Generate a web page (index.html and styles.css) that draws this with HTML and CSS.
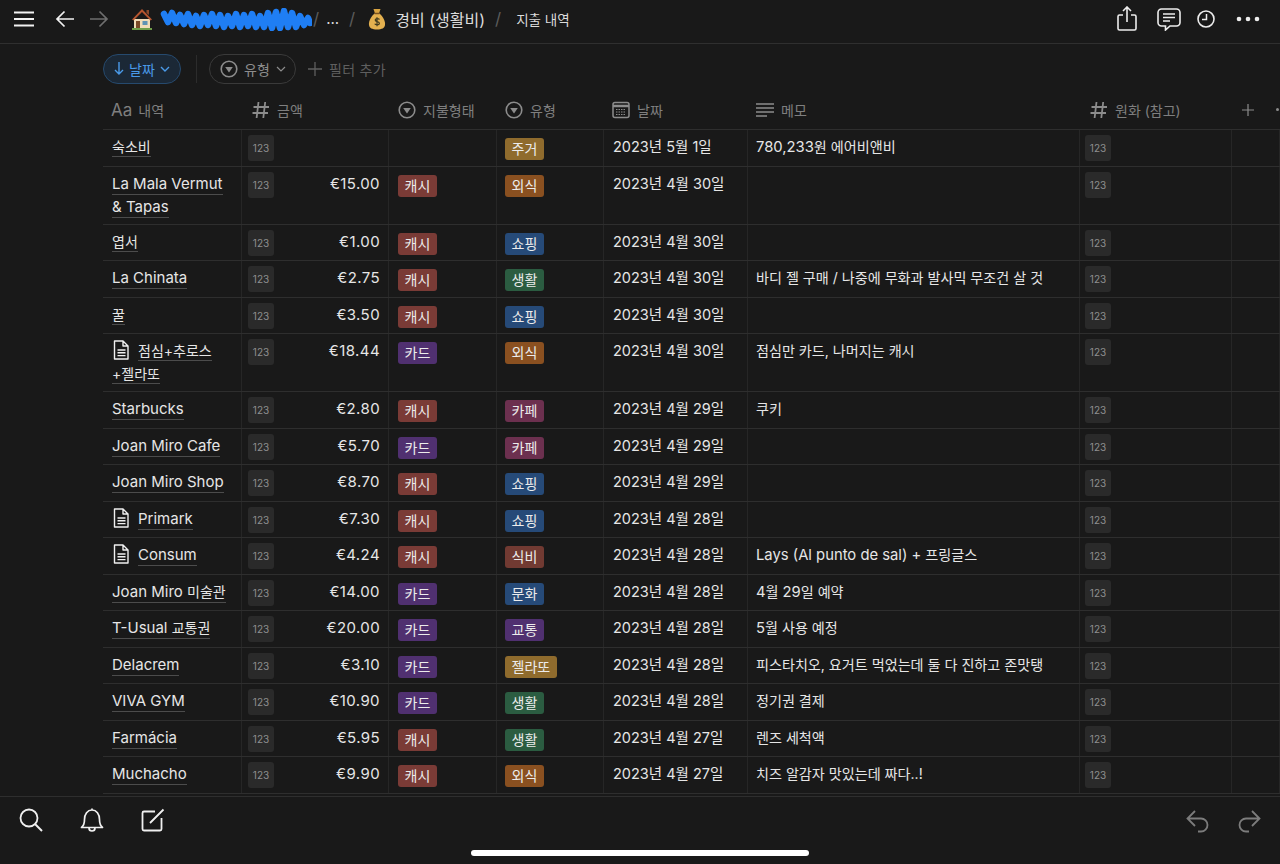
FILE: index.html
```html
<!DOCTYPE html>
<html lang="ko">
<head>
    <meta charset="UTF-8">
    <meta name="viewport" content="width=device-width, initial-scale=1.0">
    <title>지출 내역</title>
    <link rel="stylesheet" href="styles.css">
</head>
<body>
    <svg class="defs" width="0" height="0">
        <symbol id="i-select" viewBox="0 0 18 18">
            <circle cx="9" cy="9" r="7.8" fill="none" stroke="currentColor" stroke-width="1.6"/>
            <path d="M5.2 7h7.6L9 12.4z" fill="currentColor"/>
        </symbol>
        <symbol id="i-hash" viewBox="0 0 18 18">
            <path d="M6.5 1 4.6 17M13.2 1l-1.9 16M1.5 6H17M.5 12H16" fill="none" stroke="currentColor" stroke-width="1.8"/>
        </symbol>
        <symbol id="i-doc" viewBox="0 0 18 20">
            <path d="M2.5 1H11l5 5v13H2.500zM11 1v5h5M5.500 10h8M5.500 12.800h8M5.500 15.600h8" fill="none" stroke="currentColor" stroke-width="1.4" stroke-linejoin="round"/>
        </symbol>
    </svg>

    <header class="topbar">
        <svg class="icon-menu" width="20" height="16" viewBox="0 0 20 16"><path d="M0 1.5h20M0 8h20M0 14.5h20" stroke="#f2f2f2" stroke-width="2"/></svg>
        <svg class="icon-back" width="20" height="18" viewBox="0 0 20 18"><path d="M19 9H2M9.5 1.5 2 9l7.5 7.5" fill="none" stroke="#f2f2f2" stroke-width="1.7"/></svg>
        <svg class="icon-forward" width="20" height="18" viewBox="0 0 20 18"><path d="M1 9h17M10.5 1.5 18 9l-7.5 7.5" fill="none" stroke="#6e6e6e" stroke-width="1.7"/></svg>
        <nav class="crumbs">
            <svg class="emoji-house" width="22" height="22" viewBox="0 0 22 22">
                <path d="M3 11h16v10H3z" fill="#f0dcb8"/>
                <path d="M11 1 1 11.5l1.500 1L11 4l8.500 8.500 1.500-1z" fill="#b5552f"/>
                <path d="M15.5 2H18v5l-2.500-2z" fill="#8a4a2c"/>
                <path d="M5 13h4v8H5z" fill="#7a4a28"/>
                <path d="M11.5 13h5v4h-5z" fill="#5f93b5"/>
                <path d="M1 20h20v2H1z" fill="#6f9e4a"/>
            </svg>
            <svg class="scribble" width="152" height="23" viewBox="0 0 152 23">
                <path d="M4 6 8 14 12 5 16 15 20 7 24 16 28 6 32 17 36 8 40 18 44 7 48 17 52 6 56 18 60 7 64 19 68 8 72 18 76 6 80 19 84 7 88 18 92 6 96 19 100 8 104 19 108 5 112 20 116 4 120 20 124 3 128 19 132 5 136 19 140 8 144 17 148 10 150 15" fill="none" stroke="#1f7ef4" stroke-width="6.5" stroke-linecap="round" stroke-linejoin="round"/>
            </svg>
            <span class="sep sep-first">/</span>
            <span class="crumb-dots">...</span>
            <span class="sep">/</span>
            <svg class="emoji-bag" width="18" height="22" viewBox="0 0 18 22">
                <path d="M5.5 1h7L11 5.5H7z" fill="#d9a441"/>
                <path d="M6.5 5.5h5C15 8.5 17.5 13 17 17c-.4 3-3 4.500-8 4.500S1.400 20 1 17C.5 13 3 8.500 6.500 5.500z" fill="#e3b04f"/>
                <path d="M6.5 5.5h5" stroke="#7a5320" stroke-width="1.5"/>
                <path d="M11.5 11.5c-.6-1-3.800-1.400-4.300.3-.6 2.300 4.500 1.400 4.200 3.800-.3 1.800-3.900 1.600-4.700.2M9 9.300v9" fill="none" stroke="#3f3a1e" stroke-width="1.2"/>
            </svg>
            <span class="crumb">경비 (생활비)</span>
            <span class="sep">/</span>
            <span class="crumb crumb-small">지출 내역</span>
        </nav>
        <div class="top-actions">
            <svg class="act-share" width="20" height="26" viewBox="0 0 20 26"><path d="M6 9H2.500A1.500 1.500 0 0 0 1 10.500v12A1.500 1.500 0 0 0 2.500 24h15a1.500 1.500 0 0 0 1.500-1.500v-12A1.500 1.500 0 0 0 17.500 9H14M10 16V1.500M6 5l4-4 4 4" fill="none" stroke="#ededed" stroke-width="1.6"/></svg>
            <svg width="24" height="24" viewBox="0 0 24 24"><path d="M4.500 2h15A3.500 3.500 0 0 1 23 5.500v10a3.500 3.500 0 0 1-3.500 3.500H13l-4.500 4v-4h-4A3.500 3.500 0 0 1 1 15.500v-10A3.500 3.500 0 0 1 4.500 2zM6 7h12M6 10.500h12M6 14h7" fill="none" stroke="#ededed" stroke-width="1.6"/></svg>
            <svg class="act-clock" width="18" height="18" viewBox="0 0 18 18"><circle cx="9" cy="9" r="8" fill="none" stroke="#ededed" stroke-width="1.6"/><path d="M9.500 4v5.500H5" fill="none" stroke="#ededed" stroke-width="1.5"/></svg>
            <svg width="24" height="6" viewBox="0 0 24 6"><circle cx="3" cy="3" r="2.3" fill="#ededed"/><circle cx="12" cy="3" r="2.3" fill="#ededed"/><circle cx="21" cy="3" r="2.3" fill="#ededed"/></svg>
        </div>
    </header>

    <section class="filters">
        <div class="pill pill-sort">
            <svg width="10" height="13" viewBox="0 0 10 13"><path d="M5 0v12M1 8l4 4 4-4" fill="none" stroke="currentColor" stroke-width="1.4"/></svg>
            <span>날짜</span>
            <svg width="10" height="6" viewBox="0 0 10 6"><path d="m1 1 4 4 4-4" fill="none" stroke="currentColor" stroke-width="1.4"/></svg>
        </div>
        <div class="divider"></div>
        <div class="pill pill-filter">
            <svg width="18" height="18"><use href="#i-select"/></svg>
            <span>유형</span>
            <svg width="10" height="6" viewBox="0 0 10 6"><path d="m1 1 4 4 4-4" fill="none" stroke="currentColor" stroke-width="1.2"/></svg>
        </div>
        <div class="add-filter">
            <svg width="14" height="14" viewBox="0 0 14 14"><path d="M7 0v14M0 7h14" stroke="currentColor" stroke-width="1.3"/></svg>
            <span>필터 추가</span>
        </div>
    </section>

    <main class="db">
        <div class="row head">
            <div class="hcell"><span class="aa">Aa</span>내역</div>
            <div class="hcell"><svg class="hash" width="18" height="18"><use href="#i-hash"/></svg>금액</div>
            <div class="hcell"><svg class="sel" width="18" height="18"><use href="#i-select"/></svg>지불형태</div>
            <div class="hcell"><svg width="18" height="18"><use href="#i-select"/></svg>유형</div>
            <div class="hcell"><svg width="18" height="18" viewBox="0 0 18 18"><rect x="1" y="1.5" width="16" height="15" rx="2" fill="none" stroke="currentColor" stroke-width="1.5"/><path d="M1 5h16" stroke="currentColor" stroke-width="2.5"/><path d="M4 8.500h10M4 11h10M4 13.500h10" stroke="currentColor" stroke-width="1.2" stroke-dasharray="1.5 1"/></svg>날짜</div>
            <div class="hcell"><svg width="18" height="18" viewBox="0 0 18 18"><path d="M0 3h18M0 7h18M0 11h18M0 15h11" stroke="currentColor" stroke-width="1.5"/></svg>메모</div>
            <div class="hcell"><svg class="hash" width="18" height="18"><use href="#i-hash"/></svg>원화 (참고)</div>
            <div class="hcell hcell-end">
                <svg width="12" height="12" viewBox="0 0 12 12"><path d="M6 0v12M0 6h12" stroke="currentColor" stroke-width="1.2"/></svg>
                <i class="dot"></i>
            </div>
        </div>

        <div class="row">
            <div class="cell title"><span class="ko">숙소비</span></div>
            <div class="cell amount"><b class="chip">123</b></div>
            <div class="cell"></div>
            <div class="cell"><em class="tag home">주거</em></div>
            <div class="cell date">2023년 5월 1일</div>
            <div class="cell memo"><span class="lat">780,233</span>원 에어비앤비</div>
            <div class="cell"><b class="chip">123</b></div>
            <div class="cell"></div>
        </div>
        <div class="row tall">
            <div class="cell title"><span>La Mala Vermut</span><br><span>&amp; Tapas</span></div>
            <div class="cell amount"><b class="chip">123</b>€15.00</div>
            <div class="cell"><em class="tag cash">캐시</em></div>
            <div class="cell"><em class="tag eat">외식</em></div>
            <div class="cell date">2023년 4월 30일</div>
            <div class="cell memo"></div>
            <div class="cell"><b class="chip">123</b></div>
            <div class="cell"></div>
        </div>
        <div class="row">
            <div class="cell title"><span class="ko">엽서</span></div>
            <div class="cell amount"><b class="chip">123</b>€1.00</div>
            <div class="cell"><em class="tag cash">캐시</em></div>
            <div class="cell"><em class="tag shop">쇼핑</em></div>
            <div class="cell date">2023년 4월 30일</div>
            <div class="cell memo"></div>
            <div class="cell"><b class="chip">123</b></div>
            <div class="cell"></div>
        </div>
        <div class="row">
            <div class="cell title"><span>La Chinata</span></div>
            <div class="cell amount"><b class="chip">123</b>€2.75</div>
            <div class="cell"><em class="tag cash">캐시</em></div>
            <div class="cell"><em class="tag life">생활</em></div>
            <div class="cell date">2023년 4월 30일</div>
            <div class="cell memo">바디 젤 구매 / 나중에 무화과 발사믹 무조건 살 것</div>
            <div class="cell"><b class="chip">123</b></div>
            <div class="cell"></div>
        </div>
        <div class="row">
            <div class="cell title"><span class="ko">꿀</span></div>
            <div class="cell amount"><b class="chip">123</b>€3.50</div>
            <div class="cell"><em class="tag cash">캐시</em></div>
            <div class="cell"><em class="tag shop">쇼핑</em></div>
            <div class="cell date">2023년 4월 30일</div>
            <div class="cell memo"></div>
            <div class="cell"><b class="chip">123</b></div>
            <div class="cell"></div>
        </div>
        <div class="row tall">
            <div class="cell title"><svg class="doc" width="18" height="20"><use href="#i-doc"/></svg><span class="ko">점심+추로스</span><br><span class="ko">+젤라또</span></div>
            <div class="cell amount"><b class="chip">123</b>€18.44</div>
            <div class="cell"><em class="tag card">카드</em></div>
            <div class="cell"><em class="tag eat">외식</em></div>
            <div class="cell date">2023년 4월 30일</div>
            <div class="cell memo">점심만 카드, 나머지는 캐시</div>
            <div class="cell"><b class="chip">123</b></div>
            <div class="cell"></div>
        </div>
        <div class="row">
            <div class="cell title"><span>Starbucks</span></div>
            <div class="cell amount"><b class="chip">123</b>€2.80</div>
            <div class="cell"><em class="tag cash">캐시</em></div>
            <div class="cell"><em class="tag cafe">카페</em></div>
            <div class="cell date">2023년 4월 29일</div>
            <div class="cell memo">쿠키</div>
            <div class="cell"><b class="chip">123</b></div>
            <div class="cell"></div>
        </div>
        <div class="row">
            <div class="cell title"><span>Joan Miro Cafe</span></div>
            <div class="cell amount"><b class="chip">123</b>€5.70</div>
            <div class="cell"><em class="tag card">카드</em></div>
            <div class="cell"><em class="tag cafe">카페</em></div>
            <div class="cell date">2023년 4월 29일</div>
            <div class="cell memo"></div>
            <div class="cell"><b class="chip">123</b></div>
            <div class="cell"></div>
        </div>
        <div class="row">
            <div class="cell title"><span>Joan Miro Shop</span></div>
            <div class="cell amount"><b class="chip">123</b>€8.70</div>
            <div class="cell"><em class="tag cash">캐시</em></div>
            <div class="cell"><em class="tag shop">쇼핑</em></div>
            <div class="cell date">2023년 4월 29일</div>
            <div class="cell memo"></div>
            <div class="cell"><b class="chip">123</b></div>
            <div class="cell"></div>
        </div>
        <div class="row">
            <div class="cell title"><svg class="doc" width="18" height="20"><use href="#i-doc"/></svg><span>Primark</span></div>
            <div class="cell amount"><b class="chip">123</b>€7.30</div>
            <div class="cell"><em class="tag cash">캐시</em></div>
            <div class="cell"><em class="tag shop">쇼핑</em></div>
            <div class="cell date">2023년 4월 28일</div>
            <div class="cell memo"></div>
            <div class="cell"><b class="chip">123</b></div>
            <div class="cell"></div>
        </div>
        <div class="row">
            <div class="cell title"><svg class="doc" width="18" height="20"><use href="#i-doc"/></svg><span>Consum</span></div>
            <div class="cell amount"><b class="chip">123</b>€4.24</div>
            <div class="cell"><em class="tag cash">캐시</em></div>
            <div class="cell"><em class="tag food">식비</em></div>
            <div class="cell date">2023년 4월 28일</div>
            <div class="cell memo"><span class="lat">Lays (Al punto de sal) +</span> 프링글스</div>
            <div class="cell"><b class="chip">123</b></div>
            <div class="cell"></div>
        </div>
        <div class="row">
            <div class="cell title"><span>Joan Miro <i class="ko">미술관</i></span></div>
            <div class="cell amount"><b class="chip">123</b>€14.00</div>
            <div class="cell"><em class="tag card">카드</em></div>
            <div class="cell"><em class="tag shop">문화</em></div>
            <div class="cell date">2023년 4월 28일</div>
            <div class="cell memo"><span class="lat">4</span>월 <span class="lat">29</span>일 예약</div>
            <div class="cell"><b class="chip">123</b></div>
            <div class="cell"></div>
        </div>
        <div class="row">
            <div class="cell title"><span>T-Usual <i class="ko">교통권</i></span></div>
            <div class="cell amount"><b class="chip">123</b>€20.00</div>
            <div class="cell"><em class="tag card">카드</em></div>
            <div class="cell"><em class="tag card">교통</em></div>
            <div class="cell date">2023년 4월 28일</div>
            <div class="cell memo"><span class="lat">5</span>월 사용 예정</div>
            <div class="cell"><b class="chip">123</b></div>
            <div class="cell"></div>
        </div>
        <div class="row">
            <div class="cell title"><span>Delacrem</span></div>
            <div class="cell amount"><b class="chip">123</b>€3.10</div>
            <div class="cell"><em class="tag card">카드</em></div>
            <div class="cell"><em class="tag home">젤라또</em></div>
            <div class="cell date">2023년 4월 28일</div>
            <div class="cell memo">피스타치오, 요거트 먹었는데 둘 다 진하고 존맛탱</div>
            <div class="cell"><b class="chip">123</b></div>
            <div class="cell"></div>
        </div>
        <div class="row">
            <div class="cell title"><span>VIVA GYM</span></div>
            <div class="cell amount"><b class="chip">123</b>€10.90</div>
            <div class="cell"><em class="tag card">카드</em></div>
            <div class="cell"><em class="tag life">생활</em></div>
            <div class="cell date">2023년 4월 28일</div>
            <div class="cell memo">정기권 결제</div>
            <div class="cell"><b class="chip">123</b></div>
            <div class="cell"></div>
        </div>
        <div class="row">
            <div class="cell title"><span>Farmácia</span></div>
            <div class="cell amount"><b class="chip">123</b>€5.95</div>
            <div class="cell"><em class="tag cash">캐시</em></div>
            <div class="cell"><em class="tag life">생활</em></div>
            <div class="cell date">2023년 4월 27일</div>
            <div class="cell memo">렌즈 세척액</div>
            <div class="cell"><b class="chip">123</b></div>
            <div class="cell"></div>
        </div>
        <div class="row">
            <div class="cell title"><span>Muchacho</span></div>
            <div class="cell amount"><b class="chip">123</b>€9.90</div>
            <div class="cell"><em class="tag cash">캐시</em></div>
            <div class="cell"><em class="tag eat">외식</em></div>
            <div class="cell date">2023년 4월 27일</div>
            <div class="cell memo">치즈 알감자 맛있는데 짜다..!</div>
            <div class="cell"><b class="chip">123</b></div>
            <div class="cell"></div>
        </div>
    </main>

    <footer class="toolbar">
        <svg width="24" height="24" viewBox="0 0 24 24"><circle cx="10" cy="10" r="8.5" fill="none" stroke="#f0f0f0" stroke-width="1.8"/><path d="m16 16 7 7" stroke="#f0f0f0" stroke-width="2"/></svg>
        <svg width="24" height="25" viewBox="0 0 24 25"><path d="M1.500 19.500c2.500-2 3-4 3-8C4.500 6 7.500 2 12 2s7.500 4 7.500 9.500c0 4 .5 6 3 8zM9 20c0 4 6 4 6 0M12 2V.5" fill="none" stroke="#f0f0f0" stroke-width="1.7" stroke-linejoin="round"/></svg>
        <svg width="24" height="24" viewBox="0 0 24 24"><path d="M14 3.500H3A1.500 1.500 0 0 0 1.500 5v16A1.500 1.500 0 0 0 3 22.500h16a1.500 1.500 0 0 0 1.500-1.500V10M9 15 22.500 1.500" fill="none" stroke="#f0f0f0" stroke-width="1.8"/></svg>
        <div class="toolbar-right">
            <svg width="24" height="23" viewBox="0 0 24 23"><path d="M9 1 1.500 8.500 9 16M1.500 8.500H15a6.500 6.500 0 0 1 0 13h-3" fill="none" stroke="#7c7c7c" stroke-width="1.8"/></svg>
            <svg width="24" height="23" viewBox="0 0 24 23"><path d="M15 1l7.500 7.500L15 16M22.500 8.500H9a6.500 6.500 0 0 0 0 13h3" fill="none" stroke="#7c7c7c" stroke-width="1.8"/></svg>
        </div>
        <div class="home-bar"></div>
    </footer>
</body>
</html>
```
FILE: styles.css
```css
* {
    box-sizing: border-box;
}
body {
    margin: 0;
    height: 864px;
    overflow: hidden;
    display: flex;
    flex-direction: column;
    background-color: #191919;
    color: #e6e6e6;
    font-family: Inter, "Noto Sans CJK KR", sans-serif;
    font-size: 15px;
}
svg {
    flex: none;
    display: block;
}
.defs {
    position: absolute;
}

/* top bar */
.topbar {
    flex: none;
    height: 44px;
    display: flex;
    align-items: center;
    padding: 0 20px 6px 14px;
    border-bottom: 1px solid #2f2f2f;
}
.icon-back {
    margin-left: 21px;
}
.icon-forward {
    margin-left: 14px;
}
.crumbs {
    display: flex;
    align-items: center;
    margin-left: 22px;
    color: #dcdcdc;
}
.scribble {
    margin-left: 7px;
    margin-top: 2px;
}
.sep {
    color: #5c5c5c;
    font-size: 17px;
    margin: 0 10px;
}
.sep-first {
    margin-left: 1px;
    margin-right: 7px;
}
.crumb-dots {
    font-size: 15px;
}
.emoji-bag {
    margin-left: 3px;
    margin-right: 9px;
}
.crumb {
    font-size: 16px;
}
.crumb-small {
    font-size: 13.5px;
    margin-left: 5px;
}
.top-actions {
    margin-left: auto;
    display: flex;
    align-items: center;
    gap: 16px;
}
.act-share {
    margin-right: 4px;
}
.act-clock {
    margin-right: 5px;
}

/* filters */
.filters {
    flex: none;
    height: 49px;
    display: flex;
    align-items: center;
    padding-left: 103px;
    font-size: 14px;
}
.pill {
    height: 30px;
    display: flex;
    align-items: center;
    border-radius: 15px;
    border: 1px solid #3a3a3a;
    color: #8c8c8c;
}
.pill-sort {
    width: 78px;
    gap: 5px;
    padding-left: 10px;
    color: #4a9ae8;
    background-color: #1b2836;
    border-color: #264a6e;
}
.pill-filter {
    width: 87px;
    gap: 6px;
    padding-left: 10px;
}
.divider {
    width: 1px;
    height: 28px;
    background-color: #2c2c2c;
    margin: 0 12px 0 15px;
}
.add-filter {
    display: flex;
    align-items: center;
    gap: 7px;
    margin-left: 12px;
    color: #5f5f5f;
    letter-spacing: .3px;
}

/* table */
.db {
    flex: 1;
    min-height: 0;
    overflow: hidden;
    padding-left: 103px;
}
.row {
    width: 1177px;
    height: 36.5px;
    display: grid;
    grid-template-columns: 139px 147px 108px 107px 144px 332px 152px 48px;
    border-bottom: 1px solid #2e2e2e;
}
.row.tall {
    height: 58px;
}
.row.head {
    height: 37px;
}
.hcell {
    display: flex;
    align-items: center;
    gap: 7px;
    padding-left: 8px;
    padding-bottom: 3px;
    color: #7f7f7f;
    font-size: 14px;
}
.hcell svg {
    color: #8c8c8c;
}
.aa {
    font-size: 17px;
    margin-right: -1px;
}
.hash {
    margin-left: 2px;
}
.sel {
    margin-left: 1px;
}
.hcell-end {
    gap: 22px;
    padding-left: 10px;
}
.dot {
    width: 3px;
    height: 3px;
    border-radius: 50%;
    background-color: #8c8c8c;
}
.cell {
    padding: 5px 8px 0 8px;
    line-height: 23px;
    border-right: 1px solid #262626;
    overflow: hidden;
}
.title {
    padding: 5px 0 0 9px;
}
.title span {
    padding-bottom: 1px;
    border-bottom: 1px solid #4c4c4c;
}
.ko {
    font-size: 14px;
    font-style: normal;
}
.doc {
    display: inline-block;
    vertical-align: -4px;
    margin-right: 8px;
    color: #f0f0f0;
}
.amount {
    display: flex;
    justify-content: space-between;
    padding-left: 6px;
    letter-spacing: .4px;
}
.date {
    padding: 5px 0 0 9px;
    font-size: 14.5px;
}
.memo {
    padding: 5px 0 0 8px;
    font-size: 14.1px;
}
.lat {
    font-size: 14.8px;
}
.chip {
    display: inline-block;
    width: 26px;
    height: 26px;
    border-radius: 3px;
    background-color: #2a2a2a;
    color: #8f8f8f;
    font-size: 10px;
    font-weight: 400;
    letter-spacing: 0;
    line-height: 26px;
    text-align: center;
}
.cell > .chip {
    margin-left: -3px;
}
.amount > .chip {
    margin-left: 0;
}
.tag {
    display: inline-block;
    height: 22px;
    padding: 0 6.5px;
    border-radius: 3px;
    font-style: normal;
    font-size: 14px;
    line-height: 22px;
    vertical-align: top;
    margin-top: 3px;
    color: #ececec;
}
.row > .cell:nth-child(3) .tag {
    margin-left: 1px;
}
.cash { background-color: #7a3b36; }
.card { background-color: #503070; }
.home { background-color: #8f6b2d; }
.eat { background-color: #8a5020; }
.shop { background-color: #264a78; }
.life { background-color: #2b5c41; }
.cafe { background-color: #6c304f; }
.food { background-color: #713a32; }

/* bottom toolbar */
.toolbar {
    position: relative;
    flex: none;
    height: 68px;
    display: flex;
    align-items: flex-start;
    gap: 37px;
    padding: 11px 19px 0 19px;
    border-top: 1px solid #2e2e2e;
    background-color: #191919;
}
.toolbar-right {
    margin-left: auto;
    display: flex;
    gap: 27px;
    margin-top: 2px;
}
.home-bar {
    position: absolute;
    left: 471px;
    top: 53px;
    width: 338px;
    height: 6px;
    border-radius: 3px;
    background-color: #fff;
}
```
